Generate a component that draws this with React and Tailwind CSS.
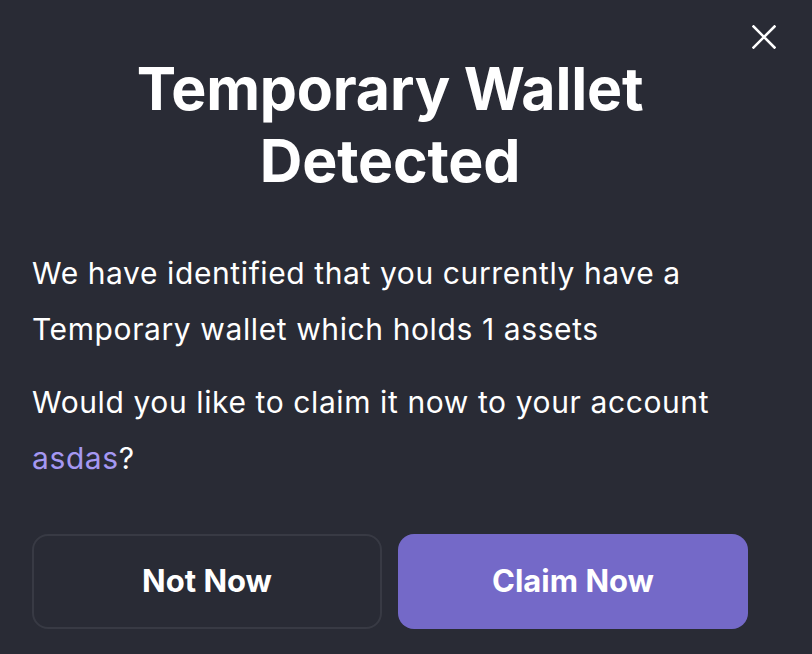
import React from "react";

const CloseIcon = () => (
  <svg width="24" height="24" viewBox="0 0 24 24" fill="none">
    <path
      d="M1.5 1.5L22.5 22.5M22.5 1.5L1.5 22.5"
      stroke="#ffffff"
      strokeWidth="2.6"
      strokeLinecap="square"
    />
  </svg>
);

const App = () => {
  return (
    <div
      className="relative w-[812px] h-[654px] overflow-hidden bg-[#292b35] text-white"
      style={{ fontFamily: "Inter, 'Noto Sans', sans-serif" }}
    >
      {/* Close button */}
      <button className="absolute left-[752px] top-[25px] w-6 h-6">
        <CloseIcon />
      </button>

      <div className="w-[716px] ml-8 pt-[53px]">
        {/* Title */}
        <h1 className="text-center text-[59px] leading-[72px] font-bold tracking-[-0.2px]">
          Temporary Wallet
          <br />
          Detected
        </h1>

        {/* Body */}
        <div className="mt-12 text-[30px] leading-[56px] font-normal tracking-[0.6px]">
          <p>
            We have identified that you currently have a
            <br />
            Temporary wallet which holds 1 assets
          </p>
          <p className="mt-[17px]">
            Would you like to claim it now to your account
            <br />
            <span className="text-[#a598f2]">asdas</span>?
          </p>
        </div>

        {/* Buttons */}
        <div className="mt-12 grid grid-cols-2 gap-4">
          <button className="h-[95px] rounded-[16px] border-2 border-[#383a44] text-[31px] font-bold text-white">
            Not Now
          </button>
          <button className="h-[95px] rounded-[16px] bg-[#7469c8] text-[31px] font-bold text-white">
            Claim Now
          </button>
        </div>
      </div>
    </div>
  );
};

export default App;
